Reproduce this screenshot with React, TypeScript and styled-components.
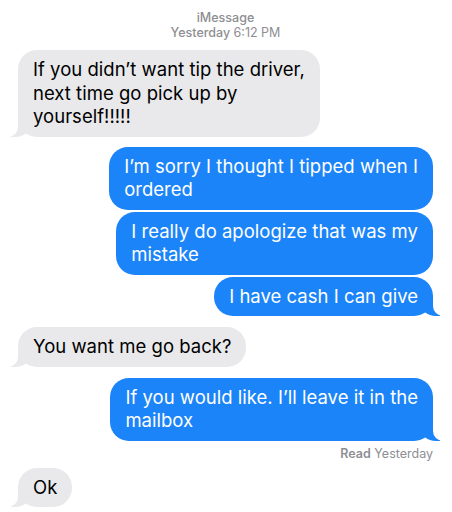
import React from "react";
import styled, { createGlobalStyle, css } from "styled-components";

const GlobalStyle = createGlobalStyle`
  html, body {
    margin: 0;
    padding: 0;
    background: #ffffff;
  }
  body {
    font-family: Inter, "Noto Sans", "Liberation Sans", sans-serif;
    -webkit-font-smoothing: antialiased;
  }
`;

// whole chat thread
const Thread = styled.div`
  width: 452px;
  height: 512px;
  box-sizing: border-box;
  padding: 10px 19px 0 18px;
  display: flex;
  flex-direction: column;
  overflow: hidden;
`;

// "iMessage / Yesterday" header
const Header = styled.div`
  text-align: center;
  color: #8e8e93;
  font-size: 12.5px;
  line-height: 15px;
  font-weight: 500;
  margin-bottom: 10px;
`;

const Time = styled.span`
  font-weight: 400;
`;

const Row = styled.div<{ $me?: boolean; $gap: number }>`
  display: flex;
  justify-content: ${(p) => (p.$me ? "flex-end" : "flex-start")};
  margin-top: ${(p) => p.$gap}px;
`;

const tailMe = css`
  &::before {
    content: "";
    position: absolute;
    bottom: 0;
    right: -7px;
    width: 20px;
    height: 20px;
    background: #1b84f8;
    border-bottom-left-radius: 16px 14px;
  }
  &::after {
    content: "";
    position: absolute;
    bottom: 0;
    right: -26px;
    width: 26px;
    height: 20px;
    background: #ffffff;
    border-bottom-left-radius: 10px;
  }
`;

const tailThem = css`
  &::before {
    content: "";
    position: absolute;
    bottom: 0;
    left: -7px;
    width: 20px;
    height: 20px;
    background: #e9e9eb;
    border-bottom-right-radius: 16px 14px;
  }
  &::after {
    content: "";
    position: absolute;
    bottom: 0;
    left: -26px;
    width: 26px;
    height: 20px;
    background: #ffffff;
    border-bottom-right-radius: 10px;
  }
`;

const Bubble = styled.div<{ $me?: boolean; $tail?: boolean }>`
  position: relative;
  padding: 8px 15px;
  border-radius: 19px;
  font-size: 18.5px;
  line-height: 23.5px;
  letter-spacing: 0.02px;
  white-space: nowrap;
  background: ${(p) => (p.$me ? "#1b84f8" : "#e9e9eb")};
  color: ${(p) => (p.$me ? "#ffffff" : "#000000")};
  ${(p) => (p.$tail ? (p.$me ? tailMe : tailThem) : "")}
`;

const Line = styled.span`
  position: relative;
  z-index: 1;
  display: block;
`;

const Receipt = styled.div`
  text-align: right;
  color: #8e8e93;
  font-size: 12.5px;
  line-height: 15px;
  margin-top: 5px;
  b {
    font-weight: 600;
  }
`;

type Msg = { me?: boolean; tail?: boolean; gap: number; lines: string[] };

const messages: Msg[] = [
  {
    gap: 0,
    tail: true,
    lines: ["If you didn’t want tip the driver,", "next time go pick up by", "yourself!!!!!"],
  },
  { me: true, gap: 10, lines: ["I’m sorry I thought I tipped when I", "ordered"] },
  { me: true, gap: 2, lines: ["I really do apologize that was my", "mistake"] },
  { me: true, gap: 2, tail: true, lines: ["I have cash I can give"] },
  { gap: 11, tail: true, lines: ["You want me go back?"] },
  { me: true, gap: 11, tail: true, lines: ["If you would like. I’ll leave it in the", "mailbox"] },
];

const App: React.FC = () => {
  return (
    <>
      <GlobalStyle />
      <Thread>
        <Header>
          iMessage
          <br />
          Yesterday <Time>6:12 PM</Time>
        </Header>
        {messages.map((m, i) => (
          <Row key={i} $me={m.me} $gap={m.gap}>
            <Bubble $me={m.me} $tail={m.tail}>
              {m.lines.map((l, j) => (
                <Line key={j}>{l}</Line>
              ))}
            </Bubble>
          </Row>
        ))}
        <Receipt>
          <b>Read</b> Yesterday
        </Receipt>
        <Row $gap={7}>
          <Bubble $tail>
            <Line>Ok</Line>
          </Bubble>
        </Row>
      </Thread>
    </>
  );
};

export default App;
